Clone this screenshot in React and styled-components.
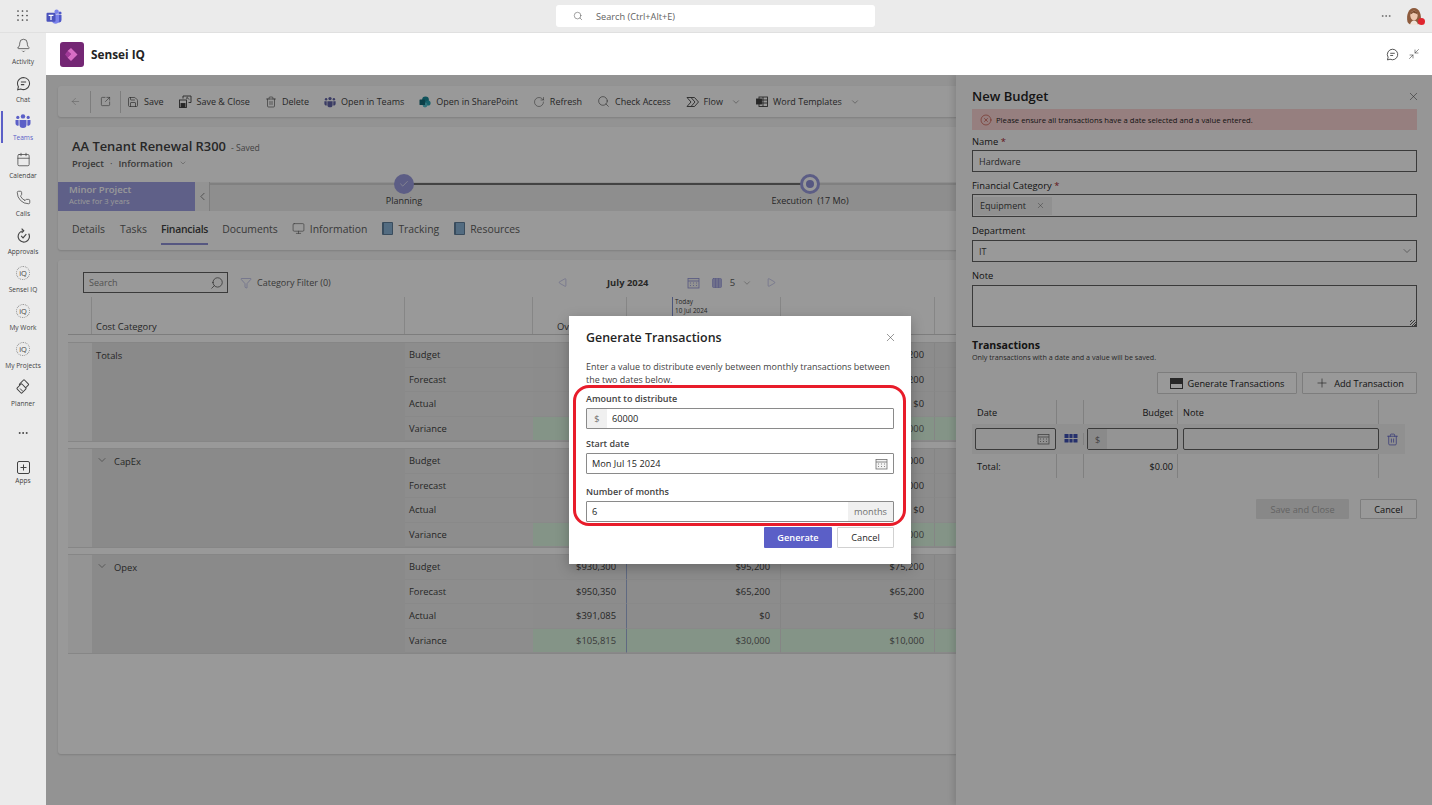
import React from 'react';
import styled, { createGlobalStyle } from 'styled-components';
import {
  Bell, Calendar, Phone, RotateCw, Plus, X, ChevronDown, ChevronLeft, ArrowLeft, Save, Trash2,
  Search, Filter, Check, Columns3, Monitor, SquareArrowOutUpRight, Minimize2, CircleX, MoreHorizontal, Triangle,
} from 'lucide-react';

const GlobalStyle = createGlobalStyle`
  html, body, #root { margin: 0; height: 100%; }
  body { font-family: "Open Sans", "Noto Sans", sans-serif; color: #242424; overflow: hidden; }
  * { box-sizing: border-box; }
`;

const Shell = styled.div`
  width: 1432px;
  height: 805px;
  display: flex;
  flex-direction: column;
  background: #ebebeb;
  overflow: hidden;
`;

/* top bar */
const TopBar = styled.header`
  height: 33px;
  flex: none;
  display: flex;
  align-items: center;
  padding: 0 9px 0 17px;
  border-bottom: 1px solid #e0e0e0;
`;
const TeamsMark = styled.div`
  margin-left: 17px;
  width: 16px;
  height: 16px;
`;
const SearchWrap = styled.div`
  flex: none;
  margin-left: 494px;
  width: 319px;
  height: 22px;
  background: #fff;
  border-radius: 3px;
  display: flex;
  align-items: center;
  gap: 13px;
  padding-left: 17px;
  font-size: 9.2px;
  color: #616161;
`;
const TopRight = styled.div`
  margin-left: auto;
  display: flex;
  align-items: center;
  gap: 13px;
  color: #616161;
`;
const AvatarWrap = styled.div`
  position: relative;
  width: 18px;
  height: 18px;
  &::after {
    content: '';
    position: absolute;
    right: -2px;
    bottom: 0;
    width: 7px;
    height: 7px;
    border-radius: 50%;
    background: #e0262f;
  }
`;

const Body = styled.div`
  flex: 1;
  display: flex;
  min-height: 0;
`;

/* left rail */
const Rail = styled.nav`
  width: 46px;
  flex: none;
  padding-top: 3px;
  display: flex;
  flex-direction: column;
  align-items: stretch;
`;
const RailItem = styled.div`
  position: relative;
  height: 38px;
  display: flex;
  flex-direction: column;
  align-items: center;
  color: ${p => (p.$active ? '#5b5fc7' : '#424242')};
  span {
    font-size: 6.6px;
    line-height: 9px;
    margin-top: 3px;
    white-space: nowrap;
  }
  ${p => p.$active && `
    &::before {
      content: '';
      position: absolute;
      left: 1px;
      top: -1px;
      width: 2px;
      height: 32px;
      background: #5b5fc7;
    }
  `}
`;
const RailIcon = styled.div`
  height: 18px;
  display: flex;
  align-items: center;
  justify-content: center;
  transform: translateY(${p => p.$nudge || 0}px);
`;
const IqBadge = styled.div`
  width: 14px;
  height: 14px;
  border-radius: 50%;
  border: 1px dotted #8a8a8a;
  font-size: 7.5px;
  line-height: 12px;
  text-align: center;
  color: #424242;
`;
const RailMore = styled.div`
  height: 39px;
  padding-bottom: 5px;
  display: flex;
  align-items: center;
  justify-content: center;
  color: #424242;
`;

const Main = styled.main`
  flex: 1;
  min-width: 0;
  display: flex;
  flex-direction: column;
`;
const AppHeader = styled.div`
  height: 42px;
  flex: none;
  background: #fff;
  display: flex;
  align-items: center;
  padding: 0 12px 0 14px;
  gap: 7px;
  color: #424242;
`;
const AppName = styled.div`
  font-size: 11.8px;
  font-weight: 700;
  color: #242424;
`;
const HeaderIcons = styled.div`
  margin-left: auto;
  display: flex;
  align-items: center;
  gap: 9px;
`;

/* page behind the scrim */
const Content = styled.div`
  position: relative;
  flex: 1;
  min-height: 0;
  overflow: hidden;
  background: #f5f5f5;
  padding: 11px 0 0 12px;
`;
const Card = styled.section`
  width: 1400px;
  background: #fff;
  border-radius: 3px;
  box-shadow: 0 1px 2px rgba(0, 0, 0, 0.14);
  margin-bottom: 10px;
`;
const ToolbarCard = styled(Card)`
  height: 31px;
  display: flex;
  align-items: center;
  padding-left: 12px;
  font-size: 9px;
  color: #424242;
`;
const ToolSep = styled.div`
  width: 1px;
  height: 22px;
  background: #d1d1d1;
  margin: 0 ${p => p.$r ?? 9}px 0 9px;
`;
const ToolItem = styled.div`
  display: flex;
  align-items: center;
  gap: 5px;
  margin-right: 15px;
  white-space: nowrap;
  svg { flex: none; }
`;
const TitleCard = styled(Card)`
  height: 123px;
  padding-top: 10px;
`;
const TitleRow = styled.div`
  height: 18px;
  padding-left: 14px;
  display: flex;
  align-items: baseline;
  gap: 5px;
  font-size: 12.9px;
  line-height: 18px;
  font-weight: 600;
  color: #424242;
  small {
    font-size: 8.6px;
    font-weight: 400;
    color: #707070;
  }
`;
const SubRow = styled.div`
  padding-left: 14px;
  margin-top: 1px;
  height: 14px;
  display: flex;
  align-items: center;
  gap: 6px;
  font-size: 9.4px;
  color: #616161;
  b {
    font-weight: 600;
  }
`;
const StageRow = styled.div`
  margin-top: 12px;
  height: 29px;
  display: flex;
  background: #ededed;
`;
const StageBanner = styled.div`
  width: 137px;
  flex: none;
  background: #9ea0e3;
  color: #fff;
  padding: 2px 0 0 11px;
  b {
    display: block;
    font-size: 9.5px;
    line-height: 12px;
    font-weight: 600;
  }
  span {
    display: block;
    font-size: 7.6px;
    line-height: 10px;
  }
`;
const StageToggle = styled.div`
  width: 15px;
  flex: none;
  background: #f5f5f5;
  border-right: 1px solid #d1d1d1;
  display: flex;
  align-items: center;
  justify-content: center;
  color: #424242;
`;
const Step = styled.div`
  width: ${p => p.$w}px;
  flex: none;
  text-align: center;
  font-size: 9px;
  line-height: 12px;
  color: #424242;
  background: linear-gradient(to right, ${p => p.$left} 50%, ${p => p.$right} 50%) 0 1px / 100% 2px no-repeat;
`;
const StepDot = styled.div`
  width: 20px;
  height: 20px;
  margin: -8px auto 1px;
  border-radius: 50%;
  display: flex;
  align-items: center;
  justify-content: center;
  color: #fff;
  background: ${p => (p.$done ? '#9a9cde' : '#fff')};
  border: ${p => (p.$done ? 'none' : '3px solid #9a9cde')};
  &::after {
    content: ${p => (p.$done ? 'none' : "''")};
    width: 8px;
    height: 8px;
    border-radius: 50%;
    background: #8f91d8;
  }
`;
const Tabs = styled.div`
  display: flex;
  padding: 10px 0 0 14px;
  gap: 14px;
  font-size: 10.4px;
  color: #616161;
`;
const Tab = styled.div`
  display: flex;
  align-items: center;
  gap: 5px;
  height: 24px;
  padding-bottom: 7px;
  margin-left: ${p => p.$ml || 0}px;
  font-weight: ${p => (p.$active ? 600 : 400)};
  letter-spacing: ${p => (p.$active ? '-0.25px' : '0')};
  color: ${p => (p.$active ? '#424242' : '#616161')};
  border-bottom: 2px solid ${p => (p.$active ? '#8f91d8' : 'transparent')};
`;
const BookIcon = styled.span`
  width: 11px;
  height: 13px;
  border-radius: 1px;
  background: #8ab4d8;
  border: 1px solid #5f7f9c;
  border-left-width: 2px;
`;

const GridCard = styled(Card)`
  height: 494px;
  padding: 12px 0 0 10px;
`;
const GridTools = styled.div`
  height: 25px;
  display: flex;
  align-items: flex-start;
  font-size: 9px;
  color: #616161;
`;
const SearchBox = styled.div`
  margin-left: 15px;
  width: 145px;
  height: 21px;
  border: 1px solid #616161;
  display: flex;
  align-items: center;
  justify-content: space-between;
  padding: 0 3px 0 5px;
  color: #8a8a8a;
  svg { color: #424242; }
`;
const FilterBtn = styled.div`
  margin-left: 12px;
  height: 21px;
  display: flex;
  align-items: center;
  gap: 5px;
`;
const MonthNav = styled.div`
  margin-left: 227px;
  height: 21px;
  display: flex;
  align-items: center;
  color: #8f91d8;
  b {
    width: 120px;
    text-align: center;
    padding-left: 2px;
    color: #424242;
    font-size: 9.4px;
    font-weight: 700;
  }
`;
const ViewSpacer = styled.span`
  width: ${p => p.$w}px;
`;
const ViewCount = styled.span`
  color: #616161;
  font-size: 9.5px;
  margin: 0 7px;
`;

const columns = '24px 313px 128px 94px 154px 154px 154px 400px';

const HeaderRow = styled.div`
  display: grid;
  grid-template-columns: ${columns};
  height: 38px;
  border-bottom: 1px solid #d1d1d1;
`;
const HeadCell = styled.div`
  position: relative;
  border-right: 1px solid #e0e0e0;
  display: flex;
  align-items: flex-end;
  padding: 0 4px 1px ${p => p.$indent || 4}px;
  font-size: 9.4px;
  color: #424242;
  white-space: nowrap;
`;
const TodayMark = styled.div`
  position: absolute;
  left: 45px;
  top: 0;
  height: 25px;
  border-left: 1px solid #7f8fd0;
  padding-left: 2px;
  font-size: 6.4px;
  line-height: 9px;
  color: #424242;
`;
const Section = styled.div`
  display: grid;
  grid-template-columns: ${columns};
  grid-auto-rows: 24.5px;
  margin-top: ${p => (p.$first ? 7 : 6)}px;
  border-top: 1px solid #e0e0e0;
  border-bottom: 1px solid #e0e0e0;
  background: #f7f7f7;
`;
const CatCell = styled.div`
  grid-column: 2;
  grid-row: 1 / span 4;
  background: #e6e6e6;
  display: flex;
  align-items: flex-start;
  gap: 6px;
  padding: 6px 4px;
  font-size: 9.4px;
  color: #424242;
  svg { margin-top: -1px; }
`;
const LabelCell = styled.div`
  grid-column: 3;
  background: #ececec;
  border-bottom: 1px solid #e4e4e4;
  padding-left: 4px;
  font-size: 9.4px;
  line-height: 24px;
  color: #424242;
`;
const ValueCell = styled.div`
  background: ${p => (p.$good ? '#dcf7e1' : '#e9e9e9')};
  border-bottom: 1px solid #e4e4e4;
  border-right: 1px solid ${p => p.$line || '#dedede'};
  padding-right: 10px;
  text-align: right;
  font-size: 9.4px;
  line-height: 24px;
  color: ${p => (p.$good ? '#616161' : '#424242')};
`;

/* side panel */
const SidePanel = styled.aside`
  position: absolute;
  top: 0;
  bottom: 0;
  right: 0;
  width: 476px;
  background: #fbfbfb;
  box-shadow: -3px 0 6px rgba(0, 0, 0, 0.12);
  padding: 11px 15px 0 16px;
`;
const PanelHead = styled.div`
  height: 23px;
  line-height: 20px;
  display: flex;
  align-items: flex-start;
  justify-content: space-between;
  font-size: 13px;
  font-weight: 600;
  color: #242424;
  svg {
    margin: 4px -3px 0 0;
    color: #424242;
  }
`;
const ErrorBar = styled.div`
  height: 21px;
  background: #fbd4d4;
  display: flex;
  align-items: center;
  gap: 4px;
  padding-left: 8px;
  font-size: 7.7px;
  color: #242424;
  svg { color: #b3321f; }
`;
const Label = styled.div`
  font-size: 9.4px;
  line-height: 13px;
  margin-top: ${p => p.$mt ?? 5}px;
  margin-bottom: ${p => p.$mb ?? 2}px;
  color: #242424;
  i {
    color: #a4262c;
    font-style: normal;
  }
`;
const Box = styled.div`
  height: ${p => p.$h || 22}px;
  background: #fff;
  border: 1px solid #616161;
  display: flex;
  align-items: center;
  padding-left: 6px;
  font-size: 9px;
  color: #424242;
`;
const Tag = styled.div`
  margin-left: -5px;
  height: 18px;
  width: 78px;
  background: #f0f0f0;
  display: flex;
  align-items: center;
  justify-content: space-between;
  padding: 0 7px 0 6px;
`;
const Caret = styled.span`
  margin-left: auto;
  margin-right: 3px;
  display: flex;
`;
const ResizeGrip = styled.span`
  margin-left: auto;
  align-self: flex-end;
  width: 6px;
  height: 6px;
  background: repeating-linear-gradient(135deg, transparent 0 1px, #616161 1px 2px);
`;
const SectionTitle = styled.div`
  margin-top: 12px;
  font-size: 10.6px;
  line-height: 13px;
  font-weight: 700;
  color: #242424;
`;
const SectionHint = styled.div`
  font-size: 7.2px;
  line-height: 11px;
  color: #424242;
`;
const ButtonRow = styled.div`
  display: flex;
  justify-content: flex-end;
  gap: ${p => p.$gap || 5}px;
  margin-top: ${p => p.$mt || 0}px;
`;
const OutlineBtn = styled.div`
  height: ${p => p.$h || 22}px;
  width: ${p => p.$w}px;
  display: flex;
  align-items: center;
  justify-content: center;
  gap: 5px;
  background: ${p => p.$bg || '#fff'};
  border: ${p => (p.$flat ? 'none' : '1px solid #d1d1d1')};
  border-radius: 1px;
  font-size: 9.2px;
  font-weight: ${p => p.$fw || 400};
  color: ${p => p.$color || '#242424'};
`;
const txCols = '85px 27px 94px 201px 26px';
const TxHead = styled.div`
  margin-top: 6px;
  display: grid;
  grid-template-columns: ${txCols};
  height: 24px;
`;
const TxCell = styled.div`
  border-right: ${p => (p.$plain ? 'none' : '1px solid #d6d6d6')};
  display: flex;
  align-items: center;
  justify-content: ${p => (p.$right ? 'flex-end' : p.$center ? 'center' : 'flex-start')};
  padding: 0 4px 0 5px;
  font-size: 9.2px;
  color: #242424;
`;
const TxInputs = styled.div`
  display: grid;
  grid-template-columns: ${txCols};
  height: 30px;
  width: 433px;
  background: #f0f0f0;
  align-items: center;
`;
const TxBox = styled.div`
  height: 22px;
  margin: ${p => p.$m || '0 1px 0 3px'};
  border: 1px solid #616161;
  border-radius: 2px;
  background: #f7f7f7;
  display: flex;
  align-items: center;
  font-size: 9px;
  color: #707070;
`;
const TxPrefix = styled.span`
  width: 19px;
  height: 100%;
  background: #e6e6e6;
  display: flex;
  align-items: center;
  justify-content: center;
`;
const TxTotal = styled(TxHead)`
  margin-top: 0;
`;

/* scrim and dialog */
const Scrim = styled.div`
  position: absolute;
  inset: 0;
  padding-left: 2px;
  background: rgba(0, 0, 0, 0.4);
  display: grid;
  place-items: center;
`;
const Dialog = styled.div`
  width: 342px;
  height: 248px;
  background: #fff;
  box-shadow: 0 4px 12px rgba(0, 0, 0, 0.25);
  padding: 12px 17px 0;
`;
const DialogHead = styled.div`
  height: 18px;
  display: flex;
  align-items: center;
  justify-content: space-between;
  font-size: 12.4px;
  font-weight: 600;
  color: #242424;
  svg {
    margin-right: -3px;
    color: #424242;
  }
`;
const DialogText = styled.p`
  margin: 14px 0 0;
  font-size: 8.95px;
  line-height: 13px;
  color: #424242;
`;
const FieldGroup = styled.div`
  position: relative;
  margin-top: 6px;
`;
const RedRing = styled.div`
  position: absolute;
  left: -13px;
  right: -12px;
  top: -7px;
  height: 141px;
  border: 3px solid #e81c2a;
  border-radius: 16px;
  pointer-events: none;
`;
const DLabel = styled.div`
  font-size: 9px;
  line-height: 13px;
  font-weight: 600;
  color: #424242;
  margin: ${p => p.$mt ?? 0}px 0 3px;
`;
const DInput = styled.div`
  height: 21px;
  border: 1px solid #8a8a8a;
  border-radius: 1px;
  display: flex;
  align-items: center;
  font-size: 9.2px;
  color: #242424;
`;
const Addon = styled.span`
  height: 100%;
  width: ${p => p.$w}px;
  flex: none;
  margin-left: ${p => (p.$end ? 'auto' : 0)};
  background: #f0f0f0;
  color: #707070;
  display: flex;
  align-items: center;
  justify-content: center;
`;
const DValue = styled.span`
  padding-left: 5px;
`;
const CalIcon = styled.span`
  margin-left: auto;
  margin-right: 5px;
  display: flex;
  color: #707070;
`;

function TeamsGlyph({ size = 16, color = '#5b5fc7' }) {
  return (
    <svg width={size} height={size} viewBox="0 0 16 16" fill={color}>
      <circle cx="8" cy="3.4" r="2.2" />
      <circle cx="13.2" cy="4.4" r="1.6" />
      <circle cx="2.8" cy="4.4" r="1.6" />
      <path d="M4.5 7h7v4.6a3.5 3.5 0 0 1-7 0z" />
      <path d="M12.4 7H15.5v3.2a2.5 2.5 0 0 1-3.2 2.4zM3.6 7H.5v3.2a2.5 2.5 0 0 0 3.2 2.4z" />
    </svg>
  );
}

function PointGlyph() {
  return (
    <svg width="12" height="12" viewBox="0 0 12 12">
      <circle cx="6.5" cy="4" r="3.4" fill="#1b8a99" />
      <circle cx="9" cy="7" r="2.6" fill="#2aa3b3" />
      <circle cx="6" cy="9" r="2.4" fill="#55c2cf" />
      <rect x="0.5" y="3.5" width="5.5" height="5.5" rx="0.6" fill="#146a78" />
    </svg>
  );
}

function Waffle() {
  const dots = [];
  for (let y = 0; y < 3; y++) {
    for (let x = 0; x < 3; x++) {
      dots.push(<circle key={`${x}${y}`} cx={1 + x * 4.5} cy={1 + y * 4.5} r="0.85" />);
    }
  }
  return (
    <svg width="12" height="12" viewBox="0 0 12 12" fill="#424242">
      {dots}
    </svg>
  );
}

function TeamsLogo() {
  return (
    <svg width="16" height="16" viewBox="0 0 16 16">
      <circle cx="10.6" cy="2.8" r="2.2" fill="#7b83eb" />
      <circle cx="14" cy="4" r="1.6" fill="#5059c9" />
      <path d="M9 6h6.5v5a2.6 2.6 0 0 1-5 1z" fill="#5059c9" />
      <path d="M6 5.5h7v6.4a3.6 3.6 0 0 1-7 0z" fill="#7b83eb" />
      <rect x="0.5" y="3.8" width="9" height="9" rx="1" fill="#4b53bc" />
      <path d="M2.6 5.8h4.8v1.1H5.6v4.2H4.4V6.9H2.6z" fill="#fff" />
    </svg>
  );
}

function Avatar() {
  return (
    <AvatarWrap>
      <svg width="18" height="18" viewBox="0 0 18 18">
        <path d="M2.5 15C1 8 3.5 1 9 1s8 7 6.5 14c-1 2-3 3-6.5 3s-5.5-1-6.5-3z" fill="#8d5b3d" />
        <ellipse cx="9" cy="8.5" rx="3.7" ry="4.8" fill="#ecc6ad" />
        <path d="M5.3 7C6 4.5 8 4 9.5 4s3 1 3.3 3.5C11 6.5 9 6 8 5.5 7.5 6.5 6.5 7 5.3 7z" fill="#7a4c30" />
        <path d="M5 18c.5-3 2-4.5 4-4.5s3.5 1.5 4 4.5z" fill="#efe3da" />
      </svg>
    </AvatarWrap>
  );
}

function AppLogo() {
  return (
    <svg width="24" height="25" viewBox="0 0 24 25">
      <rect width="24" height="25" rx="3" fill="#742774" />
      <path d="M11 6l6.5 6.5L11 19l-3.5-3.500L11 12 7.5 9z" fill="#d76ec4" />
      <path d="M7.5 9L11 12l-3.500 3.500L5 12.500z" fill="#a33a9a" />
    </svg>
  );
}

function ChatBubble({ size = 15 }) {
  return (
    <svg width={size} height={size} viewBox="0 0 16 16" fill="none" stroke="currentColor" strokeWidth="1.1">
      <path d="M8 1.5a6.5 6.5 0 1 1-3 12.3l-3.2.9.8-3.3A6.5 6.5 0 0 1 8 1.5z" />
      <path d="M5.2 6.5h5.6M5.2 9.2h3.6" />
    </svg>
  );
}

function ApprovalsIcon() {
  return (
    <svg width="15" height="15" viewBox="0 0 16 16" fill="none" stroke="currentColor" strokeWidth="1.2">
      <path d="M13.5 6a6 6 0 1 1-5.5-3" />
      <path d="M6 .6L8.3 3 6 5.3" />
      <path d="M5.5 8.5l2 2 3.500-4" />
    </svg>
  );
}

function PlannerIcon() {
  return (
    <svg width="16" height="16" viewBox="0 0 16 16" fill="none" stroke="currentColor" strokeWidth="1">
      <rect x="5.5" y="2" width="7" height="7" rx="1" transform="rotate(45 9 5.5)" />
      <rect x="3" y="6" width="7" height="7" rx="1" transform="rotate(45 6.5 9.5)" fill="#ebebeb" />
      <path d="M5 9.5l3 3" />
    </svg>
  );
}

function AppsIcon() {
  return (
    <svg width="13" height="13" viewBox="0 0 13 13" fill="none" stroke="currentColor" strokeWidth="1">
      <rect x="0.5" y="0.5" width="12" height="12" rx="1.5" />
      <path d="M6.5 3.5v6M3.5 6.5h6" />
    </svg>
  );
}

function SaveCloseIcon() {
  return (
    <svg width="13" height="13" viewBox="0 0 13 13" fill="none" stroke="currentColor" strokeWidth="0.9">
      <rect x="0.5" y="5" width="7" height="7.5" />
      <rect x="2" y="8.5" width="4" height="4" fill="currentColor" />
      <path d="M4 3.5V1h8v6.5H9.500M7 3.500l1.800-1.500M10 4.500L8.500 3" />
    </svg>
  );
}

function FlowIcon() {
  return (
    <svg width="13" height="12" viewBox="0 0 13 12" fill="none" stroke="currentColor" strokeWidth="0.9">
      <path d="M1 1.5h7.500l4 4.500-4 4.500H1L5 6z" />
      <path d="M5 1.5L9 6l-4 4.500" />
    </svg>
  );
}

function WordTemplateIcon() {
  return (
    <svg width="12" height="12" viewBox="0 0 12 12" fill="none" stroke="currentColor" strokeWidth="0.9">
      <rect x="3" y="1" width="8.5" height="9.5" />
      <path d="M3 4h8.500M3 7h8.500M7 1v9.500" />
      <rect x="0.5" y="3" width="5" height="5" fill="currentColor" />
    </svg>
  );
}

function CalendarGlyph() {
  return (
    <svg width="13" height="12" viewBox="0 0 13 12" fill="none" stroke="currentColor" strokeWidth="0.8">
      <rect x="1" y="1.5" width="11" height="9.5" fill="#f3f3f3" />
      <path d="M1 4h11" />
      <path d="M3 6h1M6 6h1M9 6h1M3 8.500h1M6 8.500h1M9 8.500h1" />
    </svg>
  );
}

function SplitGlyph() {
  return (
    <svg width="14" height="12" viewBox="0 0 14 12" fill="#3f51b5">
      <rect x="0.5" y="1" width="13" height="4" />
      <rect x="0.5" y="6" width="13" height="3.5" />
      <path d="M5 0v11M9 0v11" stroke="#fff" strokeWidth="0.8" />
    </svg>
  );
}

function CardIcon() {
  return (
    <svg width="13" height="11" viewBox="0 0 13 11" fill="none" stroke="#424242">
      <rect x="0.5" y="0.5" width="12" height="10" />
      <rect x="0.5" y="0.5" width="12" height="5" fill="#424242" />
    </svg>
  );
}

const railItems = [
  { label: 'Activity', icon: <Bell size={15} strokeWidth={1.2} /> },
  { label: 'Chat', icon: <ChatBubble /> },
  { label: 'Teams', active: true, icon: <TeamsGlyph /> },
  { label: 'Calendar', icon: <Calendar size={15} strokeWidth={1.2} /> },
  { label: 'Calls', icon: <Phone size={15} strokeWidth={1.2} /> },
  { label: 'Approvals', icon: <ApprovalsIcon /> },
  { label: 'Sensei IQ', icon: <IqBadge>iQ</IqBadge> },
  { label: 'My Work', icon: <IqBadge>iQ</IqBadge> },
  { label: 'My Projects', icon: <IqBadge>iQ</IqBadge> },
  { label: 'Planner', icon: <PlannerIcon /> },
];

const tools = [
  { label: 'Save', icon: <Save size={12} strokeWidth={1.3} /> },
  { label: 'Save & Close', icon: <SaveCloseIcon /> },
  { label: 'Delete', icon: <Trash2 size={12} strokeWidth={1.2} /> },
  { label: 'Open in Teams', icon: <TeamsGlyph size={12} color="#6264a7" /> },
  { label: 'Open in SharePoint', icon: <PointGlyph /> },
  { label: 'Refresh', icon: <RotateCw size={12} strokeWidth={1} /> },
  { label: 'Check Access', icon: <Search size={13} strokeWidth={1.1} /> },
  { label: 'Flow', icon: <FlowIcon />, caret: true },
  { label: 'Word Templates', icon: <WordTemplateIcon />, caret: true },
];

// values hidden behind the dialog are left out, only the last column peeks out
const sections = [
  {
    name: 'Totals',
    rows: [
      ['Budget', '', '', '$150,200'],
      ['Forecast', '', '', '$130,200'],
      ['Actual', '', '', '$0'],
      ['Variance', '', '', '$20,000'],
    ],
  },
  {
    name: 'CapEx',
    open: true,
    rows: [
      ['Budget', '', '', '$75,000'],
      ['Forecast', '', '', '$65,000'],
      ['Actual', '', '', '$0'],
      ['Variance', '', '', '$10,000'],
    ],
  },
  {
    name: 'Opex',
    open: true,
    rows: [
      ['Budget', '$930,300', '$95,200', '$75,200'],
      ['Forecast', '$950,350', '$65,200', '$65,200'],
      ['Actual', '$391,085', '$0', '$0'],
      ['Variance', '$105,815', '$30,000', '$10,000'],
    ],
  },
];

export default function App() {
  return (
    <Shell>
      <GlobalStyle />
      <TopBar>
        <Waffle />
        <TeamsMark><TeamsLogo /></TeamsMark>
        <SearchWrap>
          <Search size={10} strokeWidth={1.4} />
          Search (Ctrl+Alt+E)
        </SearchWrap>
        <TopRight>
          <MoreHorizontal size={12} strokeWidth={1.5} />
          <Avatar />
        </TopRight>
      </TopBar>
      <Body>
        <Rail>
          {railItems.map(item => (
            <RailItem key={item.label} $active={item.active}>
              <RailIcon>{item.icon}</RailIcon>
              <span>{item.label}</span>
            </RailItem>
          ))}
          <RailMore><MoreHorizontal size={12} strokeWidth={2} /></RailMore>
          <RailItem>
            <RailIcon $nudge={3}><AppsIcon /></RailIcon>
            <span>Apps</span>
          </RailItem>
        </Rail>
        <Main>
          <AppHeader>
            <AppLogo />
            <AppName>Sensei IQ</AppName>
            <HeaderIcons>
              <ChatBubble size={13} />
              <Minimize2 size={12} strokeWidth={1.2} />
            </HeaderIcons>
          </AppHeader>
          <Content>
            <ToolbarCard>
              <ArrowLeft size={11} strokeWidth={1.2} color="#a0a0a0" />
              <ToolSep />
              <SquareArrowOutUpRight size={11} strokeWidth={1.2} />
              <ToolSep $r={6} />
              {tools.map(tool => (
                <ToolItem key={tool.label}>
                  {tool.icon}
                  {tool.label}
                  {tool.caret && <ChevronDown size={10} strokeWidth={1} style={{ marginLeft: 3 }} />}
                </ToolItem>
              ))}
            </ToolbarCard>
            <TitleCard>
              <TitleRow>AA Tenant Renewal R300 <small>- Saved</small></TitleRow>
              <SubRow>
                <b>Project</b> · <b>Information</b> <ChevronDown size={8} strokeWidth={1.2} />
              </SubRow>
              <StageRow>
                <StageBanner>
                  <b>Minor Project</b>
                  <span>Active for 3 years</span>
                </StageBanner>
                <StageToggle><ChevronLeft size={13} strokeWidth={1.1} /></StageToggle>
                <Step $w={388} $left="#d6d6d6" $right="#707070">
                  <StepDot $done><Check size={10} strokeWidth={1.5} /></StepDot>
                  Planning
                </Step>
                <Step $w={424} $left="#707070" $right="#d6d6d6">
                  <StepDot />
                  Execution{'\u00a0\u00a0'}(17 Mo)
                </Step>
              </StageRow>
              <Tabs>
                <Tab>Details</Tab>
                <Tab $ml={1}>Tasks</Tab>
                <Tab $active>Financials</Tab>
                <Tab>Documents</Tab>
                <Tab><Monitor size={13} strokeWidth={1.2} />Information</Tab>
                <Tab $ml={1}><BookIcon />Tracking</Tab>
                <Tab $ml={1}><BookIcon />Resources</Tab>
              </Tabs>
            </TitleCard>
            <GridCard>
              <GridTools>
                <SearchBox>Search <Search size={14} strokeWidth={1.2} style={{ transform: 'scaleX(-1)' }} /></SearchBox>
                <FilterBtn><Filter size={12} strokeWidth={1} color="#8f91d8" />Category Filter (0)</FilterBtn>
                <MonthNav>
                  <Triangle size={9} strokeWidth={1.2} style={{ transform: 'rotate(-90deg)' }} />
                  <b>July 2024</b>
                  <CalendarGlyph />
                  <ViewSpacer $w={11} />
                  <Columns3 size={12} strokeWidth={1.2} fill="#b9bbe8" />
                  <ViewCount>5</ViewCount>
                  <ChevronDown size={10} strokeWidth={1} color="#616161" />
                  <ViewSpacer $w={15} />
                  <Triangle size={9} strokeWidth={1.2} style={{ transform: 'rotate(90deg)' }} />
                </MonthNav>
              </GridTools>
              <HeaderRow>
                <HeadCell />
                <HeadCell>Cost Category</HeadCell>
                <HeadCell />
                <HeadCell $indent={24}>Overall</HeadCell>
                <HeadCell>
                  <TodayMark>Today<br />10 Jul 2024</TodayMark>
                </HeadCell>
                <HeadCell />
                <HeadCell />
              </HeaderRow>
              {sections.map((section, i) => (
                <Section key={section.name} $first={i === 0}>
                  <CatCell>
                    {section.open && <ChevronDown size={12} strokeWidth={1} />}
                    {section.name}
                  </CatCell>
                  {section.rows.map(([label, a, b, c]) => {
                    const good = label === 'Variance';
                    return (
                      <React.Fragment key={label}>
                        <LabelCell>{label}</LabelCell>
                        <ValueCell $good={good} $line="#9fb0d8">{a}</ValueCell>
                        <ValueCell $good={good}>{b}</ValueCell>
                        <ValueCell $good={good}>{c}</ValueCell>
                        <ValueCell $good={good} />
                      </React.Fragment>
                    );
                  })}
                </Section>
              ))}
            </GridCard>

            <SidePanel>
              <PanelHead>New Budget <X size={13} strokeWidth={1} /></PanelHead>
              <ErrorBar>
                <CircleX size={12} strokeWidth={1.1} />
                Please ensure all transactions have a date selected and a value entered.
              </ErrorBar>
              <Label>Name <i>*</i></Label>
              <Box>Hardware</Box>
              <Label $mt={7}>Financial Category <i>*</i></Label>
              <Box $h={23}><Tag>Equipment <X size={9} strokeWidth={1} /></Tag></Box>
              <Label $mt={7} $mb={3}>Department</Label>
              <Box>IT<Caret><ChevronDown size={12} strokeWidth={1} /></Caret></Box>
              <Label $mt={7} $mb={3}>Note</Label>
              <Box $h={42}><ResizeGrip /></Box>
              <SectionTitle>Transactions</SectionTitle>
              <SectionHint>Only transactions with a date and a value will be saved.</SectionHint>
              <ButtonRow $mt={9}>
                <OutlineBtn $w={140}><CardIcon />Generate Transactions</OutlineBtn>
                <OutlineBtn $w={115}><Plus size={14} strokeWidth={1} />Add Transaction</OutlineBtn>
              </ButtonRow>
              <TxHead>
                <TxCell>Date</TxCell>
                <TxCell />
                <TxCell $right>Budget</TxCell>
                <TxCell>Note</TxCell>
                <TxCell $plain />
              </TxHead>
              <TxInputs>
                <TxBox><CalIcon><CalendarGlyph /></CalIcon></TxBox>
                <TxCell $center><SplitGlyph /></TxCell>
                <TxBox $m="0 0 0 3px"><TxPrefix>$</TxPrefix></TxBox>
                <TxBox $m="0 0 0 5px" />
                <TxCell $center $plain><Trash2 size={13} strokeWidth={1.4} color="#5b5fc7" /></TxCell>
              </TxInputs>
              <TxTotal>
                <TxCell>Total:</TxCell>
                <TxCell />
                <TxCell $right>$0.00</TxCell>
                <TxCell />
                <TxCell $plain />
              </TxTotal>
              <ButtonRow $mt={21} $gap={11}>
                <OutlineBtn $w={93} $h={20} $flat $bg="#e3e3e3" $color="#a6a6a6">Save and Close</OutlineBtn>
                <OutlineBtn $w={57} $h={20}>Cancel</OutlineBtn>
              </ButtonRow>
            </SidePanel>

            <Scrim>
              <Dialog>
                <DialogHead>Generate Transactions <X size={13} strokeWidth={1} /></DialogHead>
                <DialogText>
                  Enter a value to distribute evenly between monthly transactions between the two dates below.
                </DialogText>
                <FieldGroup>
                  <RedRing />
                  <DLabel>Amount to distribute</DLabel>
                  <DInput>
                    <Addon $w={20}>$</Addon>
                    <DValue>60000</DValue>
                  </DInput>
                  <DLabel $mt={8}>Start date</DLabel>
                  <DInput>
                    <DValue>Mon Jul 15 2024</DValue>
                    <CalIcon><CalendarGlyph /></CalIcon>
                  </DInput>
                  <DLabel $mt={11}>Number of months</DLabel>
                  <DInput>
                    <DValue>6</DValue>
                    <Addon $w={45} $end>months</Addon>
                  </DInput>
                </FieldGroup>
                <ButtonRow $mt={5}>
                  <OutlineBtn $w={68} $h={21} $flat $bg="#5b5fc7" $color="#fff" $fw={600}>Generate</OutlineBtn>
                  <OutlineBtn $w={57} $h={21}>Cancel</OutlineBtn>
                </ButtonRow>
              </Dialog>
            </Scrim>
          </Content>
        </Main>
      </Body>
    </Shell>
  );
}
